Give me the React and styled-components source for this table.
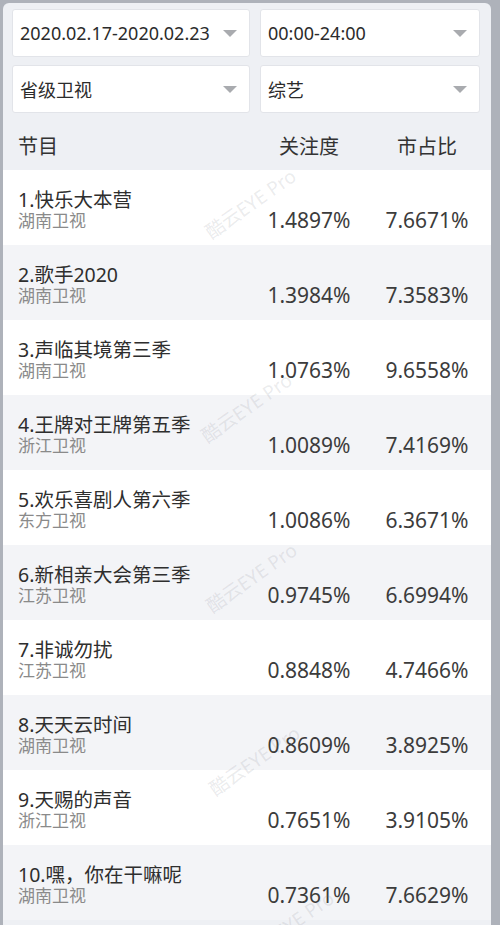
import React from "react";
import styled, { createGlobalStyle } from "styled-components";

const Global = createGlobalStyle`
    html, body {
        margin: 0;
        padding: 0;
        background: #aeb2ba;
        font-family: "Noto Sans", "Noto Sans CJK SC", sans-serif;
    }
`;

const Frame = styled.div`
    width: 500px;
    height: 925px;
    padding: 3px 9px 0 3px;
    box-sizing: border-box;
    overflow: hidden;
`;

const Panel = styled.div`
    background: #eef0f4;
    border-radius: 6px 6px 0 0;
    height: 100%;
    position: relative;
    overflow: hidden;
`;

const Filters = styled.div`
    display: grid;
    grid-template-columns: 238px 220px;
    column-gap: 10px;
    row-gap: 8px;
    padding: 6px 0 0 9px;
`;

const Select = styled.div`
    height: 48px;
    background: #fff;
    border: 1px solid #e2e4e9;
    border-radius: 3px;
    box-sizing: border-box;
    display: flex;
    align-items: center;
    justify-content: space-between;
    padding: 0 12px 0 7px;
    font-size: 18px;
    color: #2b2b2b;
`;

const Arrow = styled.span`
    width: 0;
    height: 0;
    border-left: 7px solid transparent;
    border-right: 7px solid transparent;
    border-top: 7px solid #a9abaf;
`;

const Table = styled.div`
    margin-top: 7px;
    position: relative;
`;

const Row = styled.div`
    display: grid;
    grid-template-columns: 1fr 118px 118px;
    padding: 0 5px 0 15px;
    height: ${p => p.$head ? 50 : 75}px;
    background: ${p => p.$head ? "#eef0f4" : p.$odd ? "#f3f4f7" : "#fff"};
    align-items: ${p => p.$head ? "center" : "start"};
`;

const HeadCell = styled.div`
    font-size: 20px;
    color: #333;
    text-align: ${p => p.$center ? "center" : "left"};
`;

const Name = styled.div`
    padding-top: 18px;
`;

const Title = styled.div`
    font-size: 19.5px;
    line-height: 23px;
    color: #2e2e2e;
    white-space: nowrap;
`;

const Sub = styled.div`
    font-size: 17px;
    line-height: 20px;
    color: #8a8a8a;
`;

const Value = styled.div`
    padding-top: 38px;
    font-size: 21px;
    line-height: 24px;
    color: #3c3c3c;
    text-align: center;
`;

const Mark = styled.div`
    position: absolute;
    transform: translate(-50%, -50%) rotate(-35deg);
    font-size: 19px;
    color: rgba(110, 115, 125, 0.14);
    white-space: nowrap;
    pointer-events: none;
`;

const rows = [
    ["1.快乐大本营", "湖南卫视", "1.4897%", "7.6671%"],
    ["2.歌手2020", "湖南卫视", "1.3984%", "7.3583%"],
    ["3.声临其境第三季", "湖南卫视", "1.0763%", "9.6558%"],
    ["4.王牌对王牌第五季", "浙江卫视", "1.0089%", "7.4169%"],
    ["5.欢乐喜剧人第六季", "东方卫视", "1.0086%", "6.3671%"],
    ["6.新相亲大会第三季", "江苏卫视", "0.9745%", "6.6994%"],
    ["7.非诚勿扰", "江苏卫视", "0.8848%", "4.7466%"],
    ["8.天天云时间", "湖南卫视", "0.8609%", "3.8925%"],
    ["9.天赐的声音", "浙江卫视", "0.7651%", "3.9105%"],
    ["10.嘿，你在干嘛呢", "湖南卫视", "0.7361%", "7.6629%"],
];

const marks = [[247, 83], [243, 287], [248, 457], [251, 640], [285, 805]];

export default function App() {
    return (
        <Frame>
            <Global />
            <Panel>
                <Filters>
                    <Select>2020.02.17-2020.02.23<Arrow /></Select>
                    <Select>00:00-24:00<Arrow /></Select>
                    <Select>省级卫视<Arrow /></Select>
                    <Select>综艺<Arrow /></Select>
                </Filters>
                <Table>
                    <Row $head>
                        <HeadCell>节目</HeadCell>
                        <HeadCell $center>关注度</HeadCell>
                        <HeadCell $center>市占比</HeadCell>
                    </Row>
                    {rows.map((r, i) => (
                        <Row key={i} $odd={i % 2 === 1}>
                            <Name>
                                <Title>{r[0]}</Title>
                                <Sub>{r[1]}</Sub>
                            </Name>
                            <Value>{r[2]}</Value>
                            <Value>{r[3]}</Value>
                        </Row>
                    ))}
                    {marks.map(([x, y], i) => (
                        <Mark key={i} style={{ left: x, top: y }}>酷云EYE Pro</Mark>
                    ))}
                </Table>
            </Panel>
        </Frame>
    );
}
